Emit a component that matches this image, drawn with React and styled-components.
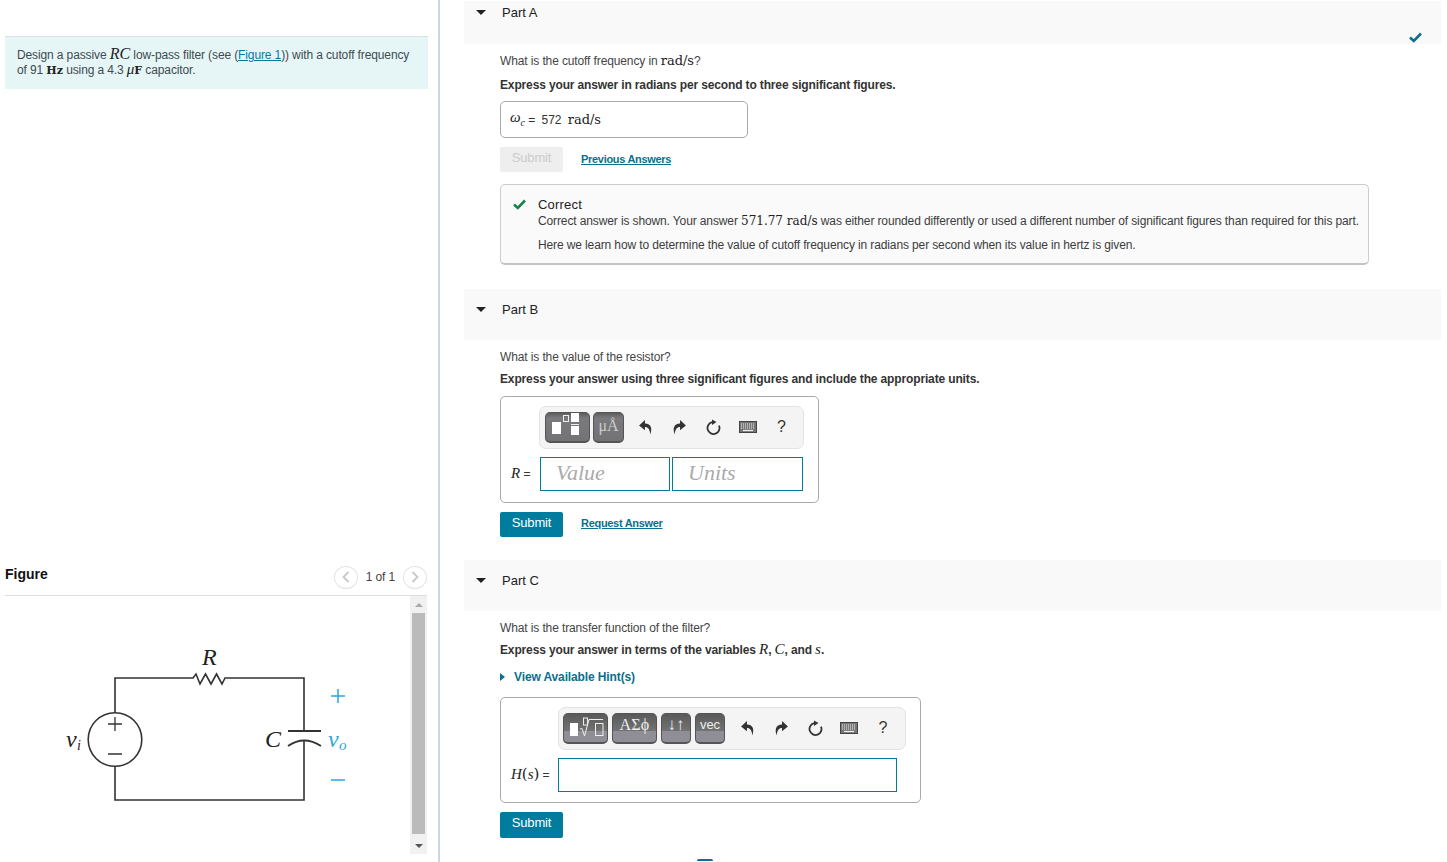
import React from 'react';
import styled, { createGlobalStyle } from 'styled-components';

const GlobalStyle = createGlobalStyle`
  html, body { margin: 0; padding: 0; background: #fff; }
  body { font-family: "Liberation Sans", Arial, sans-serif; font-size: 12px; letter-spacing: -0.12px; color: #333; overflow: hidden; }
  * { box-sizing: border-box; }
`;

const Page = styled.div`
  display: flex;
  width: 1447px;
  height: 862px;
  overflow: hidden;
`;

const LeftColumn = styled.aside`
  flex: none;
  width: 440px;
  height: 862px;
  padding: 36px 10px 0 5px;
  border-right: 2px solid #ccd6e2;
`;

const Intro = styled.div`
  height: 53px;
  padding: 11px 12px 0 12px;
  background: #e6f6f7;
  border-top: 1px solid #d8e2e6;
  line-height: 15px;
  white-space: nowrap;
  color: #3f4a50;
`;

const Math = styled.span`
  font-family: ${props => (props.$italic ? '"Liberation Serif", serif' : '"DejaVu Serif", "Liberation Serif", serif')};
  font-size: ${props => props.$size || (props.$italic ? 15 : 13)}px;
  font-style: ${props => (props.$italic ? 'italic' : 'normal')};
  font-weight: ${props => (props.$bold ? 'bold' : 'normal')};
  letter-spacing: 0;
  line-height: 0;
  color: #222;
`;

const Sub = styled.sub`
  font-size: 10px;
  line-height: 0;
`;

const InlineLink = styled.a`
  color: #007c9e;
  text-decoration: underline;
`;

const FigureHead = styled.div`
  display: flex;
  align-items: center;
  justify-content: space-between;
  height: 34px;
  margin: 473px 1px 0 0;
  border-bottom: 1px solid #ddd;
`;

const FigureTitle = styled.div`
  margin-top: -9px;
  font-size: 14px;
  font-weight: bold;
  letter-spacing: 0;
  color: #111;
`;

const Pager = styled.div`
  display: flex;
  align-items: center;
  gap: 8px;
  margin-top: -3px;
  color: #444;
`;

const PagerButton = styled.div`
  display: flex;
  align-items: center;
  justify-content: center;
  width: 24px;
  height: 23px;
  border: 1px solid #e4e4e4;
  border-radius: 50%;
`;

const FigureBody = styled.div`
  display: flex;
  justify-content: space-between;
  height: 258px;
  margin-right: 1px;
`;

const ScrollBar = styled.div`
  position: relative;
  flex: none;
  width: 17px;
  background: #f1f1f1;
`;

const ScrollThumb = styled.div`
  position: absolute;
  left: 2px;
  top: 17px;
  width: 13px;
  height: 221px;
  background: #bbb;
`;

const ScrollArrow = styled.div`
  position: absolute;
  left: 5px;
  ${props => (props.$down ? 'bottom: 6px;' : 'top: 7px;')}
  width: 0;
  height: 0;
  border-left: 4px solid transparent;
  border-right: 4px solid transparent;
  ${props => (props.$down ? 'border-top: 4px solid #555;' : 'border-bottom: 4px solid #aaa;')}
`;

const Main = styled.main`
  flex: none;
  width: 977px;
  margin-left: 24px;
  padding-top: 1px;
`;

const PartHeader = styled.div`
  display: flex;
  align-items: flex-start;
  height: ${props => props.$height}px;
  margin-top: ${props => props.$top || 0}px;
  padding: ${props => props.$pad}px 16px 0 12px;
  background: #f9f9f9;
`;

const Caret = styled.div`
  flex: none;
  width: 0;
  height: 0;
  margin: 5px 16px 0 0;
  border-left: 5px solid transparent;
  border-right: 5px solid transparent;
  border-top: 5px solid #222;
`;

const PartTitle = styled.div`
  flex: 1;
  font-size: 13px;
  line-height: 15px;
  letter-spacing: 0;
  color: #222;
`;

const DoneMark = styled.svg`
  flex: none;
  margin: 27px 3px 0 0;
`;

const PartBody = styled.div`
  padding: 9px 0 0 36px;
`;

const Question = styled.div`
  height: 16px;
  line-height: 16px;
  color: #444;
`;

const Instruction = styled.div`
  height: 16px;
  margin-top: ${props => props.$top}px;
  line-height: 16px;
  font-weight: bold;
  letter-spacing: -0.14px;
  color: #333;
`;

const HintLink = styled.div`
  display: flex;
  align-items: center;
  gap: 9px;
  height: 16px;
  margin-top: 11px;
  font-weight: bold;
  color: #0b6f8d;
`;

const HintCaret = styled.div`
  width: 0;
  height: 0;
  border-top: 4px solid transparent;
  border-bottom: 4px solid transparent;
  border-left: 5px solid #0b6f8d;
`;

const AnswerBox = styled.div`
  width: ${props => props.$width}px;
  height: ${props => props.$height}px;
  margin-top: ${props => props.$top || 8}px;
  padding: ${props => props.$pad || '0'};
  border: 1px solid #aaa;
  border-radius: 5px;
`;

const StaticAnswer = styled(AnswerBox)`
  display: flex;
  align-items: center;
  padding-left: 9px;
  white-space: pre;
  color: #333;
`;

const Toolbar = styled.div`
  display: flex;
  align-items: center;
  width: ${props => props.$width}px;
  height: 43px;
  margin-left: ${props => props.$left}px;
  padding: 0 ${props => props.$pad}px;
  gap: ${props => props.$gap}px;
  background: #f4f4f4;
  border: 1px solid #e3e3e3;
  border-radius: 7px;
`;

const ToolButton = styled.div`
  display: flex;
  align-items: center;
  justify-content: center;
  flex: none;
  width: ${props => props.$width}px;
  height: 31px;
  padding-bottom: ${props => (props.$split ? 7 : 2)}px;
  margin-right: ${props => props.$gap || 0}px;
  border: 1px solid #555;
  border-bottom-width: 2px;
  border-radius: 5px;
  background: ${props => (props.$split
    ? 'linear-gradient(#5a5a5b, #737374 62%, #8f8d96 62%, #8f8d96)'
    : 'linear-gradient(#5d5d5e, #7a7a7c 18%, #737375)')};
  color: ${props => (props.$split ? '#eee' : '#ccc')};
  font-family: ${props => (props.$sans ? '"Liberation Sans", sans-serif' : '"Liberation Serif", serif')};
  font-size: ${props => props.$size || 16}px;
  letter-spacing: ${props => props.$spacing || 0}px;
`;

const ToolIcon = styled.div`
  display: flex;
  align-items: center;
  justify-content: center;
  flex: none;
  width: ${props => props.$width}px;
  height: 30px;
  padding-bottom: 2px;
  font-size: 16px;
  color: #333;
`;

const InputRow = styled.div`
  display: flex;
  align-items: center;
  margin-top: 8px;
`;

const RowLabel = styled.div`
  flex: none;
  width: ${props => props.$width}px;
  padding-left: 10px;
  white-space: nowrap;
  color: #333;
`;

const FieldInput = styled.input`
  display: block;
  width: ${props => props.$width}px;
  height: 34px;
  margin-right: ${props => props.$gap || 0}px;
  padding: 0 0 2px 15px;
  border: 1px solid #007c9e;
  border-radius: 0;
  outline: none;
  background: #fff;
  font-family: "Liberation Serif", serif;
  font-style: italic;
  font-size: 22px;
  letter-spacing: 0;
  &::placeholder { color: #aaa; opacity: 1; }
`;

const ActionRow = styled.div`
  display: flex;
  align-items: center;
  gap: 18px;
  margin-top: 9px;
`;

const SubmitButton = styled.div`
  width: 63px;
  height: ${props => props.$height || 25}px;
  padding-top: 3px;
  border-radius: 2px;
  text-align: center;
  font-size: 13px;
  line-height: 16px;
  letter-spacing: -0.2px;
  color: ${props => (props.$disabled ? '#ccc' : '#fff')};
  background: ${props => (props.$disabled ? '#eee' : '#007c9e')};
`;

const ActionLink = styled.a`
  margin-top: ${props => props.$top}px;
  font-size: 11px;
  font-weight: bold;
  letter-spacing: -0.3px;
  color: #0b6f8d;
  text-decoration: underline;
`;

const Feedback = styled.div`
  display: flex;
  width: 869px;
  height: 81px;
  margin-top: 12px;
  padding: 12px 0 0 12px;
  background: #fafafa;
  border: 1px solid #ccc;
  border-bottom: 2px solid #c4c4c4;
  border-radius: 5px;
`;

const FeedbackMark = styled.svg`
  flex: none;
  margin: 2px 12px 0 0;
`;

const FeedbackTitle = styled.div`
  height: 15px;
  font-size: 13px;
  line-height: 15px;
  letter-spacing: 0.2px;
  color: #222;
`;

const FeedbackLine = styled.div`
  height: 16px;
  margin-top: ${props => props.$top}px;
  line-height: 16px;
  white-space: nowrap;
  color: #3c3c3c;
`;

const Spinner = styled.div`
  width: 16px;
  height: 2px;
  margin: 21px 0 0 197px;
  border-radius: 8px 8px 0 0;
  background: #0b6f8d;
`;

const Chevron = ({ flip }) => (
  <svg width="8" height="12" viewBox="0 0 8 12">
    <path d={flip ? 'M1.5 1 L6.5 6 L1.5 11' : 'M6.5 1 L1.5 6 L6.5 11'} fill="none" stroke="#c8c8c8" strokeWidth="1.8" />
  </svg>
);

const Circuit = () => (
  <svg width="405" height="258" viewBox="5 596 405 258">
    <g fill="none" stroke="#333" strokeWidth="1.6">
      <path d="M115 712.5 V678 H193 L196 674 L200 684 L205.500 674 L211 684 L216.500 674 L222 684 L225 678 H304 V731 M304 741 V800 H115 V766.500" />
      <circle cx="115" cy="739.5" r="26.800" />
      <path d="M115 717 V731 M108 724 H122 M108 754 H122" strokeWidth="1.300" />
      <path d="M288 731 H321" strokeWidth="1.800" />
      <path d="M288 746 Q304 735 321 746" strokeWidth="1.800" />
    </g>
    <g fontFamily="Liberation Serif, serif" fontStyle="italic" fill="#222">
      <text x="202" y="665" fontSize="24">R</text>
      <text x="265" y="747" fontSize="24">C</text>
      <text x="66" y="747" fontSize="24">v</text>
      <text x="77" y="750" fontSize="14">i</text>
    </g>
    <g fontFamily="Liberation Serif, serif" fontStyle="italic" fill="#2ca5e0">
      <text x="328" y="747" fontSize="24">v</text>
      <text x="339" y="750" fontSize="15">o</text>
    </g>
    <path d="M338 689 V703 M331 696 H345 M331 780 H345" stroke="#2ca5e0" strokeWidth="1.500" fill="none" />
  </svg>
);

const Undo = ({ flip }) => (
  <svg width="15" height="16" viewBox="0 0 14 15" style={flip ? { transform: 'scaleX(-1)' } : undefined}>
    <path d="M6.500 1 L1 6 L6.500 10.500 V7.500 C9.500 7.500 11 9.500 11.500 14.500 C13.500 9 12.500 4.500 6.500 4.200 Z" fill="#333" />
  </svg>
);

const Reset = () => (
  <svg width="15" height="16" viewBox="0 0 15 16">
    <path d="M13 6.600 A6 6 0 1 1 6 3.200" fill="none" stroke="#333" strokeWidth="1.800" />
    <path d="M6 0.500 L10.500 3 L6 6 Z" fill="#333" />
  </svg>
);

const Keyboard = () => (
  <svg width="18" height="12" viewBox="0 0 18 12">
    <rect x="0.500" y="0.500" width="17" height="11" fill="#777" stroke="#444" />
    <path d="M2 3 H16 M2 5 H16 M2 7 H16" stroke="#eee" strokeWidth="1" strokeDasharray="1 1" />
    <path d="M4 9.500 H14" stroke="#eee" strokeWidth="1.200" />
  </svg>
);

const EditTools = ({ width }) => (
  <>
    <ToolIcon $width={width}><Undo /></ToolIcon>
    <ToolIcon $width={width}><Undo flip /></ToolIcon>
    <ToolIcon $width={width}><Reset /></ToolIcon>
    <ToolIcon $width={width}><Keyboard /></ToolIcon>
    <ToolIcon $width={width}>?</ToolIcon>
  </>
);

const TemplateGlyph = () => (
  <svg width="43" height="28" viewBox="0 0 43 28">
    <rect x="6" y="10" width="9" height="12" fill="#fff" />
    <rect x="17.500" y="3.500" width="5" height="6" fill="none" stroke="#eee" />
    <rect x="25" y="1" width="8" height="9" fill="#fff" />
    <path d="M25 12.500 H33" stroke="#eee" />
    <rect x="25" y="14" width="8" height="9" fill="#fff" />
  </svg>
);

const RadicalGlyph = () => (
  <svg width="43" height="26" viewBox="0 0 43 26">
    <rect x="6" y="11" width="8" height="13" fill="#fff" />
    <rect x="19.500" y="6" width="4" height="7" fill="none" stroke="#eee" />
    <path d="M16 17 L18 16.500 L20.500 24 L25 7.500 H39" fill="none" stroke="#eee" />
    <rect x="31.500" y="11.500" width="7.500" height="12" fill="none" stroke="#eee" />
  </svg>
);

const App = () => (
  <Page>
    <GlobalStyle />
    <LeftColumn>
      <Intro>
        Design a passive <Math $italic $size={16}>RC</Math> low-pass filter (see (<InlineLink>Figure 1</InlineLink>)) with a cutoff frequency
        <br />
        of 91 <Math $bold $size={11}>Hz</Math> using a 4.3 <Math $italic>μ</Math><Math $bold $size={11}>F</Math> capacitor.
      </Intro>
      <FigureHead>
        <FigureTitle>Figure</FigureTitle>
        <Pager>
          <PagerButton><Chevron /></PagerButton>
          <span>1 of 1</span>
          <PagerButton><Chevron flip /></PagerButton>
        </Pager>
      </FigureHead>
      <FigureBody>
        <Circuit />
        <ScrollBar>
          <ScrollArrow />
          <ScrollThumb />
          <ScrollArrow $down />
        </ScrollBar>
      </FigureBody>
    </LeftColumn>

    <Main>
      <PartHeader $height={43} $pad={4}>
        <Caret />
        <PartTitle>Part A</PartTitle>
        <DoneMark width="13" height="11" viewBox="0 0 13 11">
          <path d="M1 5.500 L4.800 9 L12 1.500" fill="none" stroke="#0f6d8c" strokeWidth="2.600" />
        </DoneMark>
      </PartHeader>
      <PartBody>
        <Question>
          What is the cutoff frequency in <Math>rad/s</Math>?
        </Question>
        <Instruction $top={8}>Express your answer in radians per second to three significant figures.</Instruction>
        <StaticAnswer $width={248} $height={37}>
          <Math $italic>ω<Sub>c</Sub></Math>{' =  572  '}<Math>rad/s</Math>
        </StaticAnswer>
        <ActionRow>
          <SubmitButton $disabled>Submit</SubmitButton>
          <ActionLink $top={-2}>Previous Answers</ActionLink>
        </ActionRow>
        <Feedback>
          <FeedbackMark width="13" height="11" viewBox="0 0 13 11">
            <path d="M1 5.500 L4.800 9 L12 1.500" fill="none" stroke="#1c8049" strokeWidth="2.600" />
          </FeedbackMark>
          <div>
            <FeedbackTitle>Correct</FeedbackTitle>
            <FeedbackLine $top={1}>
              Correct answer is shown. Your answer <Math $size={12}>571.77 rad/s</Math> was either rounded differently or used a different number of significant figures than required for this part.
            </FeedbackLine>
            <FeedbackLine $top={8}>Here we learn how to determine the value of cutoff frequency in radians per second when its value in hertz is given.</FeedbackLine>
          </div>
        </Feedback>
      </PartBody>

      <PartHeader $height={51} $pad={13} $top={24}>
        <Caret />
        <PartTitle>Part B</PartTitle>
      </PartHeader>
      <PartBody>
        <Question>What is the value of the resistor?</Question>
        <Instruction $top={6}>Express your answer using three significant figures and include the appropriate units.</Instruction>
        <AnswerBox $width={319} $height={107} $top={9} $pad="9px 0 0 0">
          <Toolbar $width={265} $left={38} $pad={5} $gap={3}>
            <ToolButton $width={45}><TemplateGlyph /></ToolButton>
            <ToolButton $width={31} $gap={3}>μÅ</ToolButton>
            <EditTools width={31} />
          </Toolbar>
          <InputRow>
            <RowLabel $width={39}><Math $italic>R</Math> =</RowLabel>
            <FieldInput $width={130} $gap={2} placeholder="Value" readOnly />
            <FieldInput $width={131} placeholder="Units" readOnly />
          </InputRow>
        </AnswerBox>
        <ActionRow>
          <SubmitButton>Submit</SubmitButton>
          <ActionLink $top={-4}>Request Answer</ActionLink>
        </ActionRow>
      </PartBody>

      <PartHeader $height={51} $pad={13} $top={23}>
        <Caret />
        <PartTitle>Part C</PartTitle>
      </PartHeader>
      <PartBody>
        <Question>What is the transfer function of the filter?</Question>
        <Instruction $top={6}>
          Express your answer in terms of the variables <Math $italic>R</Math>, <Math $italic>C</Math>, and <Math $italic>s</Math>.
        </Instruction>
        <HintLink><HintCaret />View Available Hint(s)</HintLink>
        <AnswerBox $width={421} $height={106} $top={12} $pad="9px 0 0 0">
          <Toolbar $width={348} $left={57} $pad={4} $gap={4}>
            <ToolButton $width={45} $split><RadicalGlyph /></ToolButton>
            <ToolButton $width={45} $split $spacing={0.3}>ΑΣϕ</ToolButton>
            <ToolButton $width={30} $split $sans $size={17}>↓↑</ToolButton>
            <ToolButton $width={30} $split $sans $size={13} $gap={3}>vec</ToolButton>
            <EditTools width={30} />
          </Toolbar>
          <InputRow>
            <RowLabel $width={57}><Math $italic>H</Math><Math $size={15}>(</Math><Math $italic>s</Math><Math $size={15}>)</Math> =</RowLabel>
            <FieldInput $width={339} readOnly />
          </InputRow>
        </AnswerBox>
        <ActionRow>
          <SubmitButton $height={26}>Submit</SubmitButton>
        </ActionRow>
        <Spinner />
      </PartBody>
    </Main>
  </Page>
);

export default App;
